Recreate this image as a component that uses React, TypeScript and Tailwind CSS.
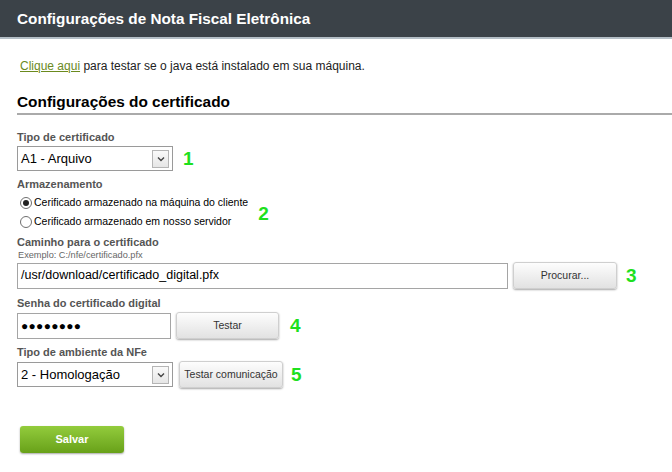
import React from "react";

const font = { fontFamily: '"Liberation Sans", Arial, sans-serif' };

function Num({ n, cls }: { n: string; cls: string }) {
  return <span className={`text-[19px] font-bold leading-[20px] text-[#1ee01e] ${cls}`}>{n}</span>;
}

function Select({ value }: { value: string }) {
  return (
    <div className="flex h-[25px] w-[156px] items-center justify-between border border-[#9a9a9a] bg-white pl-[3px] pr-[3px]">
      <span className="text-[13px] leading-[15px] text-black">{value}</span>
      <div className="flex h-[18px] w-[17px] items-center justify-center border border-[#b5b5b5] bg-gradient-to-b from-[#fafafa] to-[#e6e6e6]">
        <svg width="8" height="6" viewBox="0 0 8 6">
          <path d="M1 1.5 L4 4.5 L7 1.5" fill="none" stroke="#444" strokeWidth="1.4" />
        </svg>
      </div>
    </div>
  );
}

function Btn({ label, w }: { label: string; w: string }) {
  return (
    <div
      className={`flex h-[27px] ${w} items-center justify-center rounded-[3px] border border-[#cfcfcf] bg-gradient-to-b from-[#fdfdfd] to-[#e2e2e2] text-[10.5px] text-[#333] shadow-[0_1px_2px_rgba(0,0,0,0.35)]`}
    >
      {label}
    </div>
  );
}

function Radio({ checked, label }: { checked?: boolean; label: string }) {
  return (
    <div className="flex h-[19px] items-center pl-[3px]">
      <div className="flex h-[12px] w-[12px] items-center justify-center rounded-full border border-[#6f6f6f] bg-white">
        {checked && <div className="h-[6px] w-[6px] rounded-full bg-[#222]" />}
      </div>
      <span className="ml-[2px] text-[10.5px] leading-[13px] text-black">{label}</span>
    </div>
  );
}

const labelCls = "text-[11px] font-bold leading-[13px] text-[#555]";

export default function App() {
  return (
    <div style={font} className="h-[472px] w-[672px] overflow-hidden bg-white">
      <div className="flex h-[39px] items-center border-b-2 border-[#b4bec6] bg-[#3b4248] pl-[17px]">
        <span className="text-[15.3px] font-bold leading-[18px] text-white">Configurações de Nota Fiscal Eletrônica</span>
      </div>
      <div className="pl-[17px]">
        <div className="mt-[20px] pl-[3px] text-[12px] leading-[14px] text-[#222]">
          <span className="text-[#6b8a1e] underline">Clique aqui</span> para testar se o java está instalado em sua máquina.
        </div>
        <div className="mt-[20px] border-b-2 border-[#aaa] pb-[2px] text-[15.4px] font-bold leading-[18px] text-black">
          Configurações do certificado
        </div>
        <div className={`mt-[16px] ${labelCls}`}>Tipo de certificado</div>
        <div className="mt-[2px] flex items-center">
          <Select value="A1 - Arquivo" />
          <Num n="1" cls="ml-[10px]" />
        </div>
        <div className={`mt-[7px] ${labelCls}`}>Armazenamento</div>
        <div className="mt-[2px] flex items-center">
          <div>
            <Radio checked label="Cerificado armazenado na máquina do cliente" />
            <Radio label="Cerificado armazenado em nosso servidor" />
          </div>
          <Num n="2" cls="ml-[10px] mt-[3px]" />
        </div>
        <div className={`mt-[5px] ${labelCls}`}>Caminho para o certificado</div>
        <div className="mt-[1px] pl-[1px] text-[9.2px] leading-[11px] text-[#666]">Exemplo: C:/nfe/certificado.pfx</div>
        <div className="mt-[1px] flex items-center">
          <div className="flex h-[26px] w-[491px] items-center border border-[#a5a5a5] bg-white pl-[3px] text-[12.5px] text-black">
            /usr/download/certificado_digital.pfx
          </div>
          <div className="ml-[5px]">
            <Btn label="Procurar..." w="w-[104px]" />
          </div>
          <Num n="3" cls="ml-[9px]" />
        </div>
        <div className={`mt-[8px] ${labelCls}`}>Senha do certificado digital</div>
        <div className="mt-[2px] flex items-center">
          <div className="flex h-[26px] w-[154px] items-center border border-[#a5a5a5] bg-white pl-[3px] text-[12px] tracking-[0.3px] text-black">
            ●●●●●●●●
          </div>
          <div className="ml-[5px]">
            <Btn label="Testar" w="w-[103px]" />
          </div>
          <Num n="4" cls="ml-[11px]" />
        </div>
        <div className={`mt-[7px] ${labelCls}`}>Tipo de ambiente da NFe</div>
        <div className="mt-[2px] flex items-center">
          <Select value="2 - Homologação" />
          <div className="ml-[6px]">
            <Btn label="Testar comunicação" w="w-[104px]" />
          </div>
          <Num n="5" cls="ml-[8px]" />
        </div>
        <div className="mt-[38px] ml-[3px] flex h-[27px] w-[104px] items-center justify-center rounded-[3px] bg-gradient-to-b from-[#93cc3c] to-[#68a118] text-[11px] font-bold text-white shadow-[0_1px_2px_rgba(0,0,0,0.35)]">
          Salvar
        </div>
      </div>
    </div>
  );
}
